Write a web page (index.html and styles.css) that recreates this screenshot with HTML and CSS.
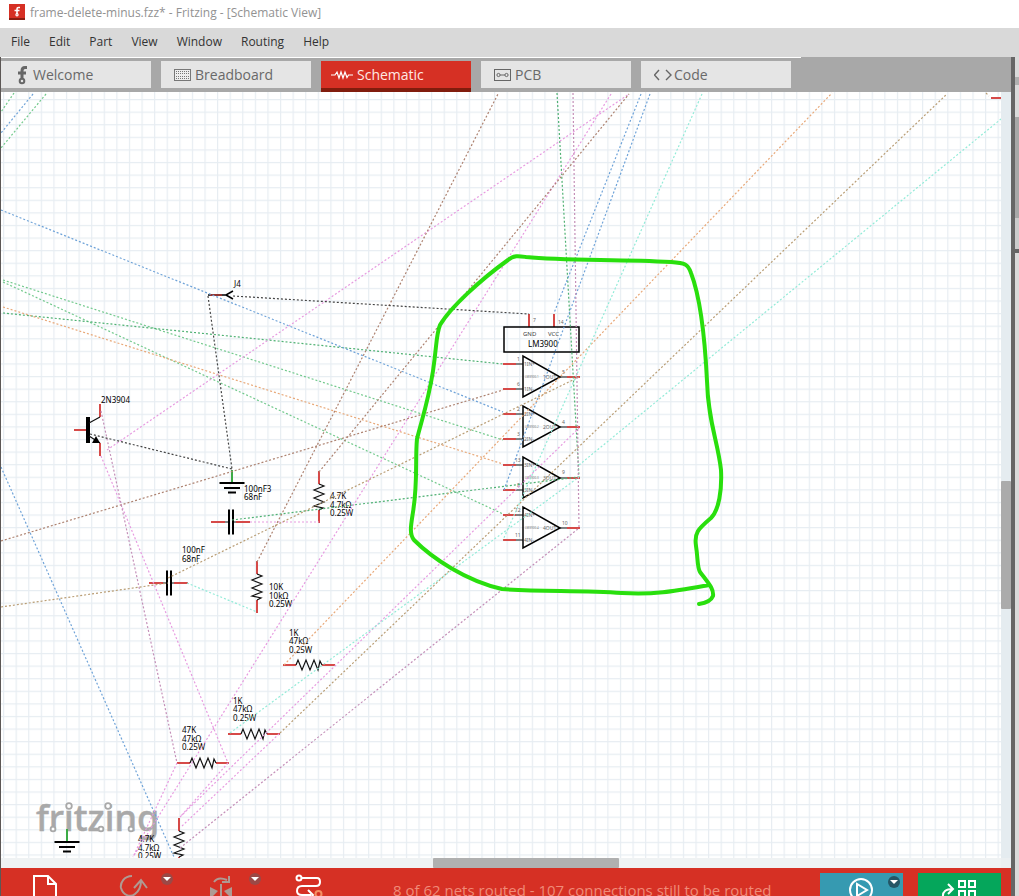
FILE: index.html
```html
<!DOCTYPE html>
<html lang="en">
<head>
<meta charset="utf-8">
<title>frame-delete-minus.fzz* - Fritzing - [Schematic View]</title>
<link rel="stylesheet" href="styles.css">
</head>
<body>
<div class="app">
<header class="titlebar">
  <svg class="app-icon" width="16" height="16" viewBox="0 0 16 16" aria-hidden="true"><rect width="16" height="16" fill="#d63024"/><rect y="14" width="16" height="2" fill="#8c1c10"/><g fill="none" stroke="#fff" stroke-width="1.6"><path d="M11 3.500H9.500Q8 3.500 8 5V10M5.500 6.500H10.500"/><circle cx="8" cy="10.800" r="1.100" stroke-width="1.200"/></g></svg>
  <span>frame-delete-minus.fzz* - Fritzing - [Schematic View]</span>
</header>
<nav class="menubar">
  <button>File</button><button>Edit</button><button>Part</button><button>View</button><button>Window</button><button>Routing</button><button>Help</button>
</nav>
<div class="workspace">
<main class="main">
  <div class="menu-rule"></div>
  <div class="tabs" role="tablist">
    <button class="tab" role="tab"><svg width="16" height="20" viewBox="0 0 16 20" aria-hidden="true"><g fill="none" stroke="#666" stroke-width="3"><path d="M13 2.500H11Q8 2.500 8 6V14M4 8H12"/><circle cx="8" cy="16" r="2.300" stroke-width="2"/></g></svg><span>Welcome</span></button>
    <button class="tab tab-wide" role="tab"><svg width="17" height="12" viewBox="0 0 17 12" aria-hidden="true"><rect x=".5" y=".5" width="16" height="11" fill="#eee" stroke="#777"/><path d="M2 2.500H15M2 4.500H15M2 7.500H15M2 9.500H15" stroke="#777" stroke-dasharray="1 1"/></svg><span>Breadboard</span></button>
    <button class="tab tab-active" role="tab" aria-selected="true"><svg width="22" height="12" viewBox="0 0 22 12" aria-hidden="true"><path d="M0 6H4L6 3L8 9L10 3L12 9L14 3L16 8.500L17.500 6H22" fill="none" stroke="#fff" stroke-width="1.200"/></svg><span>Schematic</span></button>
    <button class="tab tab-wide" role="tab"><svg width="17" height="12" viewBox="0 0 17 12" aria-hidden="true"><g fill="none" stroke="#666"><rect x=".5" y=".5" width="16" height="11"/><circle cx="4.500" cy="6" r="1.600"/><circle cx="12.500" cy="6" r="1.600"/><path d="M6 6H11"/></g></svg><span>PCB</span></button>
    <button class="tab tab-code" role="tab"><svg width="19" height="12" viewBox="0 0 19 12" aria-hidden="true"><path d="M5 1L.5 6L5 11M12 1L17 6L12 11" fill="none" stroke="#666" stroke-width="1.400"/></svg><span>Code</span></button>
  </div>
  <div class="view">
    <div class="canvas">
      <svg class="schematic" width="100%" height="100%" role="img" aria-label="Schematic">
        <defs>
          <pattern id="grid" x="3" y="99" width="12.590" height="12.590" patternUnits="userSpaceOnUse"><path d="M.6 0V12.590M0 .6H12.590" stroke="#e7edf2" stroke-width="1.200"/></pattern>
          <g id="zig"><path class="pin" d="M-26 0H-13M13 0H26"/><path class="thin" d="M-13 0L-11 -5L-7 5L-3 -5L1 5L5 -5L9 5L11 -4L13 0"/></g>
          <g id="cap"><path class="pin" d="M-20 0H-6M5 0H19"/><path class="thin" d="M-6 0H-2M2 0H5"/><path d="M-2 -12.500V12.500M2 -12.500V12.500" stroke="#000" stroke-width="2"/></g>
          <g id="gnd"><path d="M0 -13V0" stroke="#3cab46" stroke-width="2"/><path d="M-12.500 0H12.500M-8 5H8M-4 9.500H4" stroke="#000" stroke-width="1.800"/></g>
          <g id="amp"><path d="M523 356V397L560 377Z" fill="none" stroke="#000" stroke-width="1.500"/><path class="thin" d="M516 364H523M516 389H523M560 377H567"/><path class="pin" d="M503 364H516M503 389H516M567 377H580"/></g>
        </defs>
        <g transform="translate(-1 -92)">
          <rect width="100%" height="100%" x="1" y="92" fill="url(#grid)"/>
          <text class="brand" x="36" y="831">fritzing</text>
          <g fill="#fff" stroke="#a9a9a9" stroke-width="1.800"><circle cx="69" cy="806" r="2.800"/><circle cx="108" cy="806" r="2.800"/><circle cx="53" cy="829" r="2.400"/><circle cx="101" cy="829" r="2.400"/><circle cx="131" cy="829" r="2.400"/></g>

          <use href="#zig" x="309" y="665"/><use href="#zig" x="254" y="734"/><use href="#zig" x="203" y="763"/>
          <use href="#zig" transform="translate(319 497) rotate(90)"/><use href="#zig" transform="translate(257 587) rotate(90)"/><use href="#zig" transform="translate(179 844) rotate(90)"/>
          <use href="#cap" x="231" y="522"/><use href="#cap" x="169" y="583"/>
          <use href="#gnd" x="232" y="483"/><use href="#gnd" x="67" y="842"/>
          <path class="pin" d="M74 430H88M100 404V417M100 443V456M991 98H1001M529 314V327M554 314V327"/>
          <path d="M88 417V443" stroke="#000" stroke-width="4"/><path class="thin" d="M89 423L100 417M89 436L100 443"/><path d="M96 436L100 443L92 443Z"/>
          <path d="M208 295H226L233 291M226 295L233 299" fill="none" stroke="#000" stroke-width="1.500"/><path d="M210 295H222" stroke="#b0342f" stroke-width="1.500"/>
          <rect x="504" y="327" width="75" height="25" fill="none" stroke="#000" stroke-width="1.500"/>
          <use href="#amp"/><use href="#amp" y="50"/><use href="#amp" y="101"/><use href="#amp" y="151"/>

          <g class="part-text">
            <text x="234" y="287">J4</text><text x="101" y="403">2N3904</text>
            <text x="244" y="492">100nF3</text><text x="244" y="500">68nF</text>
            <text x="330" y="499">4.7K</text><text x="330" y="508">4.7kΩ</text><text x="330" y="516">0.25W</text>
            <text x="182" y="553">100nF</text><text x="182" y="562">68nF</text>
            <text x="269" y="590">10K</text><text x="269" y="599">10kΩ</text><text x="269" y="607">0.25W</text>
            <text x="289" y="636">1K</text><text x="289" y="644">47kΩ</text><text x="289" y="653">0.25W</text>
            <text x="233" y="704">1K</text><text x="233" y="712">47kΩ</text><text x="233" y="721">0.25W</text>
            <text x="182" y="733">47K</text><text x="182" y="742">47kΩ</text><text x="182" y="750">0.25W</text>
            <text x="138" y="842">4.7K</text><text x="138" y="851">4.7kΩ</text><text x="138" y="859">0.25W</text>
            <text x="528" y="347">LM3900</text>
          </g>
          <g class="pin-name"><text x="523" y="336">GND</text><text x="548" y="336">VCC</text></g>
          <g class="pin-text">
            <text x="533" y="322">7</text><text x="558" y="324">14</text>
            <text x="517" y="361">1</text><text x="517" y="386">6</text><text x="562" y="374">5</text><text x="524" y="366">1IN+</text><text x="524" y="391">1IN-</text><text x="543" y="379">1OUT</text>
            <text x="517" y="411">2</text><text x="517" y="436">3</text><text x="562" y="424">4</text><text x="524" y="416">2IN+</text><text x="524" y="441">2IN-</text><text x="543" y="429">2OUT</text>
            <text x="515" y="462">13</text><text x="517" y="487">8</text><text x="562" y="474">9</text><text x="524" y="467">3IN+</text><text x="524" y="492">3IN-</text><text x="543" y="480">3OUT</text>
            <text x="515" y="512">12</text><text x="515" y="537">11</text><text x="562" y="525">10</text><text x="524" y="517">4IN+</text><text x="524" y="542">4IN-</text><text x="543" y="530">4OUT</text>
          </g>
          <g class="chip-text"><text x="525" y="378">LM3900-1</text><text x="525" y="428">LM3900-2</text><text x="525" y="479">LM3900-3</text><text x="525" y="529">LM3900-4</text></g>

          <g class="nets">
            <path stroke="#72c98c" d="M14 93L1 112M46 94L1 148M3 280L503 440M3 282L503 514"/>
            <path stroke="#4fb173" d="M3 313L503 364M232 520L579 477M557 93L579 477"/>
            <path stroke="#6fa3d8" d="M33 94L1 133M1 210L503 412M1 467L174 857M641 94L554 313M650 94L504 490"/>
            <path stroke="#e8a878" d="M3 307L503 464M284 665L832 93"/>
            <path stroke="#e79be0" d="M107 450L629 94M101 456L228 763M250 522H319M611 94L133 857M177 763L133 857M228 763L180 817M180 817L579 428M182 826L280 733"/>
            <path stroke="#ad8270" d="M1 541L503 390M257 562L498 94M319 472L629 94"/>
            <path stroke="#b99d74" d="M1 607L168 583M168 578L579 377M280 733L947 94M986 93L989 96"/>
            <path stroke="#c48fb8" d="M101 411L177 763M573 93L579 528M180 848L579 528"/>
            <path stroke="#93ebd8" d="M187 583L257 612M230 733L579 477M579 465L1001 119M702 94L503 540"/>
            <path stroke="#444" d="M208 296L232 469M233 296L529 314M90 434L232 469"/>
          </g>
          <path d="M709 585C675 591 655 595 622 593C580 590 540 592 502 589C466 581 432 558 414 540C409 534 411 525 413 512C418 482 415 459 417 439C421 422 428 403 433 371C437 344 436 335 440 325C450 308 480 280 508 260C514 255 519 256 526 257C565 261 615 259 671 262C685 263 688 264 691 273C701 299 705 340 707 381C708 421 718 442 721 470C722 490 719 510 711 518C698 529 694 533 696 546C698 558 697 567 700 572C709 584 714 589 713 596C711 601 706 603 699 604" fill="none" stroke="#29df0d" stroke-width="4" stroke-linecap="round" stroke-linejoin="round"/>
        </g>
      </svg>
    </div>
    <div class="v-scroll"><div class="v-thumb"></div></div>
    <div class="h-scroll"><div class="h-thumb"></div></div>
    <div class="corner"></div>
  </div>
  <footer class="toolbar">
    <button class="tool" aria-label="New note"><svg width="26" height="28" viewBox="0 0 26 28"><path d="M1 28V8H15L23 16V28M15 8V16H23" fill="none" stroke="#fff" stroke-width="2"/></svg></button>
    <button class="tool" aria-label="Rotate"><svg width="54" height="28" viewBox="0 0 54 28"><path d="M11 8C3 8-1 15 0 20C2 27 9 30 14 26C18 23 20 20 20 13M13 20L20 12L26 20" fill="none" stroke="#b09a93" stroke-width="2"/><circle cx="46" cy="11" r="6" fill="#9b4946"/><path d="M42 9H50L46 13Z" fill="#fff"/></svg></button>
    <button class="tool" aria-label="Flip"><svg width="54" height="28" viewBox="0 0 54 28"><g fill="#b09a93"><path d="M1 19V28H4L9 23ZM23 19V28H20L15 23Z"/></g><path d="M5 14Q9 8 18 12M20 8V14H13M12 16V28" fill="none" stroke="#b09a93" stroke-width="2"/><circle cx="46" cy="11" r="6" fill="#9b4946"/><path d="M42 9H50L46 13Z" fill="#fff"/></svg></button>
    <button class="tool" aria-label="Autoroute"><svg width="28" height="28" viewBox="0 0 28 28"><g fill="none" stroke-width="2"><path d="M4 10H20Q23 10 23 14Q23 18 19 18H5Q0 18 0 23Q0 27 5 27H14M11 22L16 27L11 32" stroke="#fff"/><circle cx="2" cy="10" r="2.500" fill="#d63024" stroke="#fff"/><circle cx="21.500" cy="26" r="3" stroke="#f58f63"/></g></svg></button>
    <span class="status">8 of 62 nets routed - 107 connections still to be routed</span>
    <button class="action simulate" aria-label="Simulate"><svg width="83" height="23" viewBox="0 0 83 23"><g fill="none" stroke="#fff" stroke-width="2"><circle cx="41" cy="17" r="11"/><path d="M37 11V23L47 17Z"/></g><circle cx="74" cy="9" r="6" fill="#245666"/><path d="M70 7H78L74 11Z" fill="#fff"/></svg></button>
    <button class="action share" aria-label="Share"><svg width="83" height="23" viewBox="0 0 83 23"><g fill="none" stroke="#fff" stroke-width="2"><path d="M25 24Q24 16 35 16M30 11L35 16L30 21"/><path d="M41 8H47V14H41ZM51 8H57V14H51ZM41 18H47V24H41ZM51 18H57V24H51Z"/></g></svg></button>
  </footer>
</main>
<aside class="side">
  <div class="side-head"></div><div class="side-bar"></div><div class="side-search"></div><div class="side-parts"></div><div class="side-foot"></div><div class="side-split"></div><div class="side-rest"></div>
</aside>
</div>
</div>
</body>
</html>
```
FILE: styles.css
```css
* { box-sizing: border-box; }
body { margin: 0; font-family: "Open Sans", "Noto Sans", sans-serif; background: #fff; }
button { font: inherit; border: 0; margin: 0; padding: 0; background: none; color: inherit; }
.app { display: flex; flex-direction: column; height: 100vh; overflow: hidden; }
.titlebar { display: flex; align-items: center; gap: 5px; height: 28px; flex: none; padding: 0 9px 4px; font-size: 12px; color: #929292; white-space: nowrap; }
.titlebar span { line-height: 16px; padding-top: 2px; }
.app-icon { flex: none; }
.menubar { display: flex; align-items: center; gap: 19px; height: 29px; flex: none; padding: 0 11px 2px; background: #d9d9d9; color: #333; font-size: 12px; }
.workspace { display: flex; flex: 1; min-height: 0; }
.main { display: flex; flex-direction: column; flex: 1; min-width: 0; border-left: 1px solid #5c5755; background: #a8a8a8; }
.menu-rule { height: 1px; width: 80%; max-width: 800px; background: #fff; flex: none; }
.tabs { display: flex; gap: 10px; height: 34px; flex: none; padding-top: 3px; background: #a8a8a8; }
.tab { display: flex; align-items: center; gap: 3px; flex: 0 1 150px; height: 27px; padding-left: 13px; background: #e5e5e5; color: #696969; font-size: 14px; line-height: 20px; }
.tab svg { flex: none; }
.tab-wide { gap: 4px; }
.tab-active { gap: 4px; height: 31px; padding-left: 10px; background: #d63024; border-bottom: 4px solid #811c0d; color: #ffe9e4; }
.tab-code { gap: 1px; }
.view { display: grid; grid-template-columns: 1fr 10px; grid-template-rows: 1fr 10px; flex: 1; min-height: 0; }
.canvas { position: relative; overflow: hidden; background: #fff; }
.schematic { position: absolute; inset: 0; display: block; font-family: "Noto Sans", sans-serif; }
.v-scroll { background: #e5ecf0; padding-top: 389px; }
.v-thumb { height: 128px; background: #ababab; border-radius: 1px; }
.h-scroll { background: #eff2f3; padding-left: 432px; }
.h-thumb { width: 186px; height: 10px; background: #b0b0b0; border-radius: 1px; }
.corner { background: #ebeff1; }
.toolbar { display: flex; height: 28px; flex: none; overflow: hidden; padding: 0 10px 0 32px; background: #d63024; }
.tool { display: flex; align-items: flex-start; flex: none; width: 88px; height: 28px; }
.tool svg { overflow: visible; }
.status { flex: 1; padding-left: 8px; padding-top: 10px; font-size: 15px; line-height: 24px; color: #f08b78; white-space: nowrap; }
.action { flex: none; width: 83px; height: 23px; margin-top: 5px; overflow: hidden; }
.action svg { display: block; }
.simulate { background: #369ab1; margin-right: 15px; }
.share { background: #05a65b; }
.side { display: flex; flex-direction: column; flex: none; width: 8px; border-left: 4px solid #666; background: #dadada; }
.side-head { height: 20px; }
.side-bar { height: 8px; background: #b0b0b0; }
.side-search { height: 32px; }
.side-parts { height: 101px; background: #a8a8a8; }
.side-foot { height: 31px; background: #cbcbcb; }
.side-split { height: 4px; background: #666; }
.side-rest { flex: 1; }
.pin { fill: none; stroke: #d64a48; stroke-width: 2; }
.thin { fill: none; stroke: #111; stroke-width: 1.2; }
.nets { fill: none; stroke-width: 1.2; stroke-dasharray: 2 2; }
.part-text { font-size: 8px; fill: #000; }
.pin-name { font-size: 6px; fill: #444; }
.pin-text { font-size: 5px; fill: #666; }
.chip-text { font-size: 3px; fill: #777; }
.brand { font-size: 36px; font-weight: 500; fill: #a9a9a9; stroke: #a9a9a9; stroke-width: 0.5; }
```
